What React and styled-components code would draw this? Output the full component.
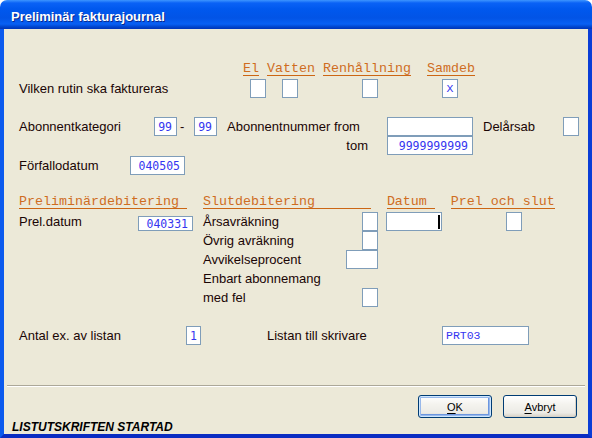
import React from "react";
import styled, { createGlobalStyle } from "styled-components";

const GlobalStyle = createGlobalStyle`
  html, body {
    margin: 0;
    padding: 0;
    background: #fff;
  }
  body {
    font-family: "Liberation Sans", Arial, sans-serif;
  }
`;

const Window = styled.div`
  width: 592px;
  height: 438px;
  display: flex;
  flex-direction: column;
`;

const TitleBar = styled.div`
  flex: none;
  height: 29px;
  box-sizing: border-box;
  padding: 3px 0 0 11px;
  display: flex;
  align-items: center;
  border-radius: 7px 7px 0 0;
  background: linear-gradient(
    to bottom,
    #3d95ff 0px,
    #0a62f6 3px,
    #0058ee 9px,
    #0254e6 18px,
    #0860f4 24px,
    #0044cc 27px,
    #0034b8 29px
  );
  color: #fff;
  font: bold 13px "Liberation Sans", Arial, sans-serif;
  text-shadow: 1px 1px 0 #0a2a8e;
`;

const Frame = styled.div`
  flex: 1;
  display: flex;
  flex-direction: column;
  background: #ece9d8;
  border-left: 4px solid #0b5aee;
  border-right: 4px solid #0a3dd6;
  border-bottom: 4px solid #0a2cc2;
`;

const Form = styled.div`
  flex: 1;
  padding: 33px 0 0 15px;
  display: flex;
  flex-direction: column;
`;

const Row = styled.div`
  display: flex;
  align-items: center;
  height: ${(p) => p.$h || 19}px;
  margin-top: ${(p) => p.$mt || 0}px;
  margin-left: ${(p) => p.$ml || 0}px;
`;

const Label = styled.span`
  flex: none;
  box-sizing: border-box;
  width: ${(p) => (p.$w ? `${p.$w}px` : "auto")};
  margin-left: ${(p) => p.$ml || 0}px;
  padding-left: ${(p) => p.$pl || 0}px;
  padding-right: ${(p) => p.$pr || 0}px;
  text-align: ${(p) => p.$align || "left"};
  font-size: 13px;
  color: #1a0505;
  white-space: nowrap;
`;

const Heads = styled.div`
  display: flex;
  height: 14px;
  margin-top: ${(p) => p.$mt || 0}px;
  margin-left: ${(p) => p.$ml || 0}px;
  font-family: "Liberation Mono", "Courier New", monospace;
  font-size: 13.333px;
  color: #cf6d1f;
`;

const Head = styled.span`
  flex: none;
  width: ${(p) => p.$ch}ch;
  margin-left: ${(p) => p.$gap || 0}ch;
  line-height: 13px;
  border-bottom: 1px solid #cc6614;
  white-space: pre;
`;

const Field = styled.div`
  flex: none;
  box-sizing: border-box;
  width: ${(p) => p.$w}px;
  height: ${(p) => p.$h || 19}px;
  margin-left: ${(p) => p.$ml || 0}px;
  align-self: ${(p) => p.$self || "auto"};
  border: 1px solid #7f9db9;
  background: #fff;
  display: flex;
  align-items: center;
  justify-content: ${(p) =>
    p.$align === "left" ? "flex-start" : p.$align === "center" ? "center" : "flex-end"};
  padding: 0 ${(p) => (p.$pad === undefined ? 4 : p.$pad)}px;
  font-family: ${(p) =>
    p.$serif
      ? `"Liberation Mono", "Courier New", monospace`
      : `"DejaVu Sans Mono", "Liberation Mono", monospace`};
  font-size: 11.5px;
  color: #3535f0;
`;

const Caret = styled.span`
  width: 2px;
  height: 14px;
  background: #000;
`;

const Block = styled.div`
  display: flex;
  margin-top: 3px;
`;

const LeftCol = styled.div`
  flex: none;
  width: 184px;
`;

const RightCol = styled.div`
  display: flex;
  flex-direction: column;
`;

const Footer = styled.div`
  flex: none;
  display: flex;
  flex-direction: column;
`;

const Separator = styled.div`
  margin: 0 3px;
  border-top: 1px solid #aca899;
  border-bottom: 1px solid #fff;
`;

const ButtonRow = styled.div`
  display: flex;
  justify-content: flex-end;
  gap: 11px;
  padding-right: 11px;
  margin-top: 8px;
`;

const Button = styled.div`
  width: 74px;
  height: 23px;
  box-sizing: border-box;
  border: 1px solid #003c74;
  border-radius: 3px;
  background: linear-gradient(to bottom, #ffffff 0%, #f4f3ee 40%, #ecebe6 80%, #d6d0c5 100%);
  box-shadow: ${(p) =>
    p.$default
      ? "inset 0 0 0 1px #cee7ff, inset 0 0 0 2px #98b8ea, inset -1px -1px 0 2px #6b96e0"
      : "inset -1px -1px 0 0 #d8d2c6"};
  display: flex;
  align-items: center;
  justify-content: center;
  font: 11px "Liberation Sans", Tahoma, sans-serif;
  color: #000;

  u {
    text-decoration: underline;
    text-underline-offset: 2px;
  }
`;

const Status = styled.div`
  height: 14px;
  margin-top: 2px;
  padding-left: 8px;
  line-height: 14px;
  font: italic bold 12px/14px "Liberation Sans", Arial, sans-serif;
  color: #000;
`;

export default function App() {
  return (
    <>
      <GlobalStyle />
      <Window>
        <TitleBar>Preliminär fakturajournal</TitleBar>
        <Frame>
          <Form>
            <Heads $ml={224}>
              <Head $ch={2}>El</Head>
              <Head $ch={6} $gap={1}>Vatten</Head>
              <Head $ch={11} $gap={1}>Renhållning</Head>
              <Head $ch={6} $gap={2}>Samdeb</Head>
            </Heads>

            <Row $mt={3}>
              <Label $w={231}>Vilken rutin ska faktureras</Label>
              <Field $w={16} />
              <Field $w={16} $ml={16} />
              <Field $w={16} $ml={64} />
              <Field $w={16} $ml={64} $align="center" $pad={0} $serif>
                X
              </Field>
            </Row>

            <Row $mt={19}>
              <Label $w={135}>Abonnentkategori</Label>
              <Field $w={23}>99</Field>
              <Label $w={17} $pl={3}>-</Label>
              <Field $w={23}>99</Field>
              <Label $w={170} $pl={10}>Abonnentnummer from</Label>
              <Field $w={86} />
              <Label $w={90} $pl={10}>Delårsab</Label>
              <Field $w={16} />
            </Row>

            <Row>
              <Label $w={368} $align="right" $pr={19}>tom</Label>
              <Field $w={86}>9999999999</Field>
            </Row>

            <Row $mt={1}>
              <Label $w={111}>Förfallodatum</Label>
              <Field $w={55}>040505</Field>
            </Row>

            <Heads $mt={20}>
              <Head $ch={21}>Preliminärdebitering</Head>
              <Head $ch={21} $gap={2}>Slutdebitering</Head>
              <Head $ch={6} $gap={2}>Datum</Head>
              <Head $ch={13} $gap={2}>Prel och slut</Head>
            </Heads>

            <Block>
              <LeftCol>
                <Row>
                  <Label $w={119}>Prel.datum</Label>
                  <Field $w={55} $h={15} $self="flex-end">040331</Field>
                </Row>
              </LeftCol>
              <RightCol>
                <Row>
                  <Label $w={159}>Årsavräkning</Label>
                  <Field $w={16} />
                  <Field $w={56} $ml={8} $pad={1}>
                    <Caret />
                  </Field>
                  <Field $w={16} $ml={64} />
                </Row>
                <Row>
                  <Label $w={159}>Övrig avräkning</Label>
                  <Field $w={16} />
                </Row>
                <Row>
                  <Label $w={143}>Avvikelseprocent</Label>
                  <Field $w={32} />
                </Row>
                <Row>
                  <Label>Enbart abonnemang</Label>
                </Row>
                <Row>
                  <Label $w={159}>med fel</Label>
                  <Field $w={16} />
                </Row>
              </RightCol>
            </Block>

            <Row $mt={19}>
              <Label $w={167}>Antal ex. av listan</Label>
              <Field $w={15} $align="center" $pad={0}>1</Field>
              <Label $w={175} $ml={66}>Listan till skrivare</Label>
              <Field $w={87} $align="left" $pad={3} $serif>
                PRT03
              </Field>
            </Row>
          </Form>

          <Footer>
            <Separator />
            <ButtonRow>
              <Button $default>
                <span>
                  <u>O</u>K
                </span>
              </Button>
              <Button>
                <span>
                  <u>A</u>vbryt
                </span>
              </Button>
            </ButtonRow>
            <Status>LISTUTSKRIFTEN STARTAD</Status>
          </Footer>
        </Frame>
      </Window>
    </>
  );
}
